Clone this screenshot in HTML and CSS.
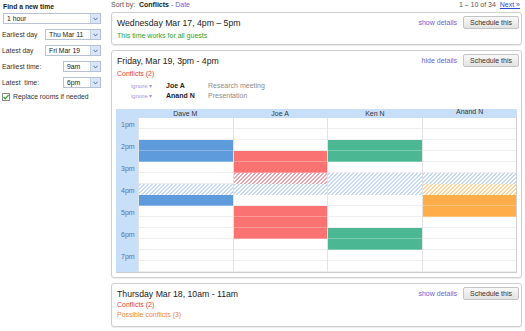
FILE: index.html
```html
<html>
  <head>
    <link rel="stylesheet" href="styles.css">
    <title>Find a new time</title>
  </head>
  <body>
    <div class="page">
      <div class="sidebar">
        <div class="side-title">Find a new time</div>
        <div class="field">
          <div class="select">
            <span class="select-text">1 hour</span>
            <span class="arrow"><svg width="5" height="4" viewBox="0 0 5 4"><path d="M0.5 0.8 L2.5 3 L4.5 0.8" fill="none" stroke="#4d6fae" stroke-width="1"/></svg></span>
          </div>
        </div>
        <div class="field">
          <span class="field-label">Earliest day</span>
          <div class="select day">
            <span class="select-text">Thu Mar 11</span>
            <span class="arrow"><svg width="5" height="4" viewBox="0 0 5 4"><path d="M0.5 0.8 L2.5 3 L4.5 0.8" fill="none" stroke="#4d6fae" stroke-width="1"/></svg></span>
          </div>
        </div>
        <div class="field">
          <span class="field-label">Latest day</span>
          <div class="select day">
            <span class="select-text">Fri Mar 19</span>
            <span class="arrow"><svg width="5" height="4" viewBox="0 0 5 4"><path d="M0.5 0.8 L2.5 3 L4.5 0.8" fill="none" stroke="#4d6fae" stroke-width="1"/></svg></span>
          </div>
        </div>
        <div class="field">
          <span class="field-label">Earliest time:</span>
          <div class="select time">
            <span class="select-text">9am</span>
            <span class="arrow"><svg width="5" height="4" viewBox="0 0 5 4"><path d="M0.5 0.8 L2.5 3 L4.5 0.8" fill="none" stroke="#4d6fae" stroke-width="1"/></svg></span>
          </div>
        </div>
        <div class="field">
          <span class="field-label">Latest&nbsp; time:</span>
          <div class="select time">
            <span class="select-text">6pm</span>
            <span class="arrow"><svg width="5" height="4" viewBox="0 0 5 4"><path d="M0.5 0.8 L2.5 3 L4.5 0.8" fill="none" stroke="#4d6fae" stroke-width="1"/></svg></span>
          </div>
        </div>
        <div class="check-row">
          <svg class="checkbox" width="8" height="8" viewBox="0 0 8 8">
            <rect x="0.5" y="0.5" width="7" height="7" fill="#fff" stroke="#8a8a8a"/>
            <path d="M1.6 4 L3.3 5.8 L6.6 1.8" fill="none" stroke="#2e9e2e" stroke-width="1.3"/>
          </svg>
          <span>Replace rooms if needed</span>
        </div>
      </div>

      <div class="main">
        <div class="topbar">
          <div class="sort">Sort by:&nbsp; <b>Conflicts</b> - <a class="link">Date</a></div>
          <div class="pager">1 – 10 of 34&nbsp; <a class="next">Next »</a></div>
        </div>

        <!-- option 1 -->
        <div class="card">
          <div class="card-head">
            <div class="card-title">Wednesday Mar 17, 4pm – 5pm</div>
            <a class="link details">show details</a>
            <div class="btn">Schedule this</div>
          </div>
          <div class="note ok">This time works for all guests</div>
        </div>

        <!-- option 2, expanded -->
        <div class="card">
          <div class="card-head">
            <div class="card-title">Friday, Mar 19, 3pm - 4pm</div>
            <a class="link details">hide details</a>
            <div class="btn">Schedule this</div>
          </div>
          <div class="note bad">Conflicts (2)</div>
          <div class="conflicts">
            <div class="conflict">
              <span class="ignore">ignore ▾</span>
              <span class="who">Joe A</span>
              <span class="what">Research meeting</span>
            </div>
            <div class="conflict">
              <span class="ignore">ignore ▾</span>
              <span class="who">Anand N</span>
              <span class="what">Presentation</span>
            </div>
          </div>

          <div class="cal">
            <div class="cal-head">
              <div></div>
              <div>Dave M</div>
              <div>Joe A</div>
              <div>Ken N</div>
              <div class="raised">Anand N</div>
            </div>
            <div class="cal-body">
              <div class="times">
                <div class="hour">1pm</div>
                <div class="hour">2pm</div>
                <div class="hour">3pm</div>
                <div class="hour">4pm</div>
                <div class="hour">5pm</div>
                <div class="hour">6pm</div>
                <div class="hour">7pm</div>
              </div>
              <div class="col">
                <div class="ev blue" style="grid-row: 3 / 5"></div>
                <div class="ev hatch" style="grid-row: 7 / 8"></div>
                <div class="ev blue" style="grid-row: 8 / 9"></div>
              </div>
              <div class="col">
                <div class="ev red" style="grid-row: 4 / 6"></div>
                <div class="ev hatch-red" style="grid-row: 6 / 7"></div>
                <div class="ev hatch" style="grid-row: 7 / 8"></div>
                <div class="ev red" style="grid-row: 9 / 12"></div>
              </div>
              <div class="col">
                <div class="ev green" style="grid-row: 3 / 5"></div>
                <div class="ev hatch" style="grid-row: 6 / 8"></div>
                <div class="ev green" style="grid-row: 11 / 13"></div>
              </div>
              <div class="col">
                <div class="ev hatch" style="grid-row: 6 / 7"></div>
                <div class="ev hatch-orange" style="grid-row: 7 / 8"></div>
                <div class="ev orange" style="grid-row: 8 / 10"></div>
              </div>
            </div>
          </div>
        </div>

        <!-- option 3 -->
        <div class="card last">
          <div class="card-head">
            <div class="card-title">Thursday Mar 18, 10am - 11am</div>
            <a class="link details">show details</a>
            <div class="btn">Schedule this</div>
          </div>
          <div class="note bad tall">Conflicts (2)</div>
          <div class="note maybe tall">Possible conflicts (3)</div>
        </div>
      </div>
    </div>
  </body>
</html>
```

FILE: styles.css
```css
body {
	margin: 0;
	overflow: hidden;
	font-family: "Liberation Sans", Arial, sans-serif;
	font-size: 7px;
	color: #222;
	background: #fff;
}

.page {
	display: flex;
	align-items: flex-start;
}

/* Left column: search form */
.sidebar {
	width: 99px;
	padding: 2px 0 0 2px;
	display: flex;
	flex-direction: column;
	gap: 5px;
}

.side-title {
	font-weight: bold;
	font-size: 6.8px;
	line-height: 9px;
	padding-left: 1px;
	margin-bottom: -3px;
}

.field {
	display: flex;
	align-items: center;
	height: 11px;
}

.field-label {
	font-size: 6.8px;
	color: #333;
}

.select {
	margin-left: auto;
	width: 98px;
	height: 11px;
	box-sizing: border-box;
	border: 1px solid #b7c2d4;
	background: #fff;
	display: flex;
	align-items: center;
}
.select.day { width: 56px; }
.select.time { width: 38px; }

.select-text {
	flex: 1;
	padding-left: 3px;
	font-size: 6.8px;
	line-height: 9px;
}

.arrow {
	width: 9px;
	height: 9px;
	background: #dae6f8;
	border-left: 1px solid #c2d0e6;
	display: flex;
	align-items: center;
	justify-content: center;
}

.check-row {
	display: flex;
	align-items: center;
	gap: 3px;
	height: 9px;
	margin-top: -1px;
	font-size: 6.8px;
	color: #333;
}

/* Right column: results */
.main {
	flex: 1;
	margin: 0 3px 0 10px;
}

.topbar {
	display: flex;
	justify-content: space-between;
	line-height: 10px;
	height: 12px;
	padding-right: 2px;
	color: #555;
}
.topbar b { color: #222; }

.link { color: #6b5fd5; }
.next { color: #2a4fd6; text-decoration: underline; }

.card {
	border: 1px solid #cecece;
	border-radius: 3px;
	box-shadow: 0 1px 1px rgba(0, 0, 0, 0.08);
	padding: 3px 2px 4px 5px;
	margin-bottom: 5px;
}
.card.last { padding-bottom: 6px; }

.card-head {
	display: flex;
	align-items: center;
	height: 13px;
}

.card-title {
	flex: 1;
	font-size: 8.7px;
	color: #222;
}

.details { margin-right: 6px; }

.btn {
	width: 56px;
	height: 13px;
	box-sizing: border-box;
	border: 1px solid #c4c4c4;
	border-radius: 2px;
	background: linear-gradient(#f8f8f8, #e2e2e2);
	color: #333;
	line-height: 11px;
	text-align: center;
}

.note {
	line-height: 9px;
	margin-top: 2px;
}
.note.tall { line-height: 10px; margin-top: 0; }
.note.tall:first-of-type { margin-top: 2px; }
.ok { color: #1f9f2f; }
.bad { color: #e83b3b; }
.maybe { color: #f0892a; }

.conflicts {
	margin-top: 3px;
	padding-left: 14px;
}

.conflict {
	display: flex;
	line-height: 10px;
}

.ignore {
	width: 35px;
	font-size: 6px;
	color: #9a95e2;
}

.who {
	width: 42px;
	font-weight: bold;
}

.what { color: #8a8a8a; }

/* Day grid */
.cal {
	margin: 8px 2px 0 -1px;
}

.cal-head {
	display: grid;
	grid-template-columns: 22px repeat(4, 1fr);
	height: 9px;
	line-height: 9px;
	background: #c8dffa;
	text-align: center;
	color: #333;
}
.cal-head .raised { line-height: 5px; }

.cal-body {
	display: grid;
	grid-template-columns: 22px repeat(4, 1fr);
	border-right: 1px solid #cfcfcf;
	border-bottom: 1px solid #cfcfcf;
}

.times {
	background: #c8dffa;
	display: flex;
	flex-direction: column;
}

.hour {
	height: 22px;
	box-sizing: border-box;
	padding: 2px 0 0 5px;
	line-height: 9px;
	color: #5b7393;
}

.col {
	display: grid;
	grid-template-rows: repeat(14, 11px);
	border-left: 1px solid #e2e2e2;
	background: repeating-linear-gradient(to bottom, #fff 0 10px, #eeeeee 10px 11px);
}

.ev { grid-column: 1; }

.blue, .red, .green, .orange {
	background-image: repeating-linear-gradient(to bottom, transparent 0 10px, rgba(255, 255, 255, 0.28) 10px 11px);
}
.blue { background-color: #5e9bdc; }
.red { background-color: #fb7272; }
.green { background-color: #4bb893; }
.orange { background-color: #ffad48; }

/* diagonal stripes, tiled so they stay crisp */
.hatch, .hatch-red, .hatch-orange {
	background-color: #fff;
	background-size: 4px 4px;
}
.hatch {
	background-image: linear-gradient(135deg, #c4d8f7 0 35%, transparent 35% 50%, #c4d8f7 50% 85%, transparent 85%);
}
.hatch-red {
	background-image: linear-gradient(135deg, #eaa3ad 0 30%, transparent 30% 50%, #eaa3ad 50% 80%, transparent 80%);
}
.hatch-orange {
	background-image: linear-gradient(135deg, #ffd397 0 35%, transparent 35% 50%, #ffd397 50% 85%, transparent 85%);
}
```
